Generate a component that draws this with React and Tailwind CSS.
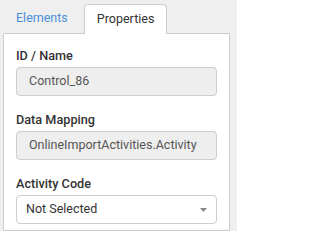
import React from "react";

const Field = ({ label, value }) => (
  <div className="flex flex-col">
    <label className="text-[12.7px] leading-[19px] font-medium text-[#333]">{label}</label>
    <div className="mt-[2px] h-[29px] flex items-center pl-[12px] bg-[#eeeeee] border border-[#cccccc] rounded-[4px] text-[12.5px] text-[#555]">
      {value}
    </div>
  </div>
);

const App = () => {
  return (
    <div
      className="w-[237px] h-[231px] overflow-hidden bg-[#efefef] flex flex-col pl-[3px] pr-[7px]"
      style={{ fontFamily: "Roboto, 'Liberation Sans', sans-serif" }}
    >
      {/* tabs */}
      <div className="flex items-end h-[33px] shrink-0">
        <div className="h-[29px] px-[13px] flex items-center text-[12.5px] text-[#4a8fd6]">
          Elements
        </div>
        <div className="relative z-10 ml-[3px] -mb-px h-[30px] px-[12px] flex items-center bg-white border border-b-0 border-[#cccccc] rounded-t-[4px] text-[12.5px] text-[#333]">
          Properties
        </div>
      </div>

      {/* panel */}
      <div className="flex-1 bg-white border border-[#cccccc] px-[12px] pt-[12px] flex flex-col gap-[14px]">
        <Field label="ID / Name" value="Control_86" />
        <Field label="Data Mapping" value="OnlineImportActivities.Activity" />
        <div className="flex flex-col">
          <label className="text-[12.7px] leading-[19px] font-medium text-[#333]">Activity Code</label>
          <div className="mt-[2px] h-[29px] flex items-center justify-between pl-[9px] pr-[9px] bg-white border border-[#cccccc] rounded-[4px] text-[12.5px] text-[#333]">
            <span>Not Selected</span>
            <svg width="7" height="4" viewBox="0 0 7 4">
              <polygon points="0,0 7,0 3.5,4" fill="#888" />
            </svg>
          </div>
        </div>
      </div>
    </div>
  );
};

export default App;
